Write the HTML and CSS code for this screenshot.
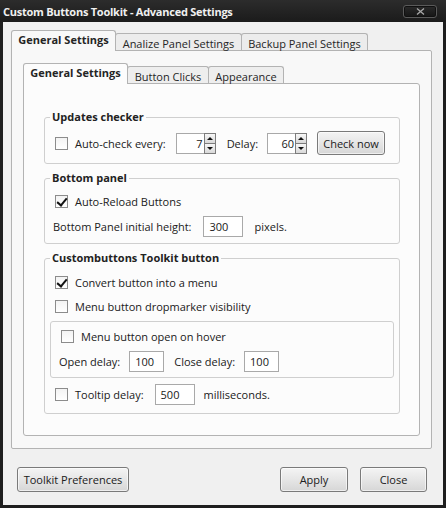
FILE: index.html
```html
<!DOCTYPE html>
<html>
<head>
<meta charset="utf-8">
<link rel="stylesheet" href="styles.css">
</head>
<body>
<div class="window">
  <div class="titlebar">
    <span class="title">Custom Buttons Toolkit - Advanced Settings</span>
    <span class="closebtn"><svg width="9" height="7" viewBox="0 0 9 7"><path d="M1 0.5 L8 6.5 M8 0.5 L1 6.5" stroke="#a8a8a8" stroke-width="1.3" fill="none"/></svg></span>
  </div>
  <div class="client">
    <div class="tabs outer-tabs">
      <div class="tab selected t-gen">General Settings</div>
      <div class="tab t-analize">Analize Panel Settings</div>
      <div class="tab t-backup">Backup Panel Settings</div>
    </div>
    <div class="panel outer-panel">
      <div class="tabs inner-tabs">
        <div class="tab selected t-igen">General Settings</div>
        <div class="tab t-clicks">Button Clicks</div>
        <div class="tab t-appear">Appearance</div>
      </div>
      <div class="panel inner-panel">
        <fieldset class="group g-updates">
          <legend>Updates checker</legend>
          <div class="row r-updates">
            <span class="cb"></span>
            <span class="lbl l-every">Auto-check every:</span>
            <span class="spin"><span class="val">7</span><span class="arrows"><span class="up"></span><span class="down"></span></span></span>
            <span class="lbl l-delay">Delay:</span>
            <span class="spin"><span class="val">60</span><span class="arrows"><span class="up"></span><span class="down"></span></span></span>
            <button class="btn btn-check">Check now</button>
          </div>
        </fieldset>
        <fieldset class="group g-bottom">
          <legend>Bottom panel</legend>
          <div class="row r-cb r-first">
            <span class="cb checked"></span>
            <span class="lbl">Auto-Reload Buttons</span>
          </div>
          <div class="row r-field">
            <span class="lbl">Bottom Panel initial height:</span>
            <span class="field f-wide">300</span>
            <span class="lbl">pixels.</span>
          </div>
        </fieldset>
        <fieldset class="group g-toolkit">
          <legend>Custombuttons Toolkit button</legend>
          <div class="row r-cb r-first">
            <span class="cb checked"></span>
            <span class="lbl">Convert button into a menu</span>
          </div>
          <div class="row r-cb">
            <span class="cb"></span>
            <span class="lbl">Menu button dropmarker visibility</span>
          </div>
          <div class="subbox">
            <div class="row r-cb">
              <span class="cb"></span>
              <span class="lbl">Menu button open on hover</span>
            </div>
            <div class="row r-field">
              <span class="lbl">Open delay:</span>
              <span class="field f-narrow">100</span>
              <span class="lbl">Close delay:</span>
              <span class="field f-narrow">100</span>
            </div>
          </div>
          <div class="row r-cbfield">
            <span class="cb"></span>
            <span class="lbl">Tooltip delay:</span>
            <span class="field f-wide">500</span>
            <span class="lbl">milliseconds.</span>
          </div>
        </fieldset>
      </div>
    </div>
    <div class="footer">
      <button class="btn btn-prefs">Toolkit Preferences</button>
      <div class="footer-right">
        <button class="btn btn-apply">Apply</button>
        <button class="btn btn-close">Close</button>
      </div>
    </div>
  </div>
</div>
</body>
</html>
```

FILE: styles.css
```css
* { box-sizing: border-box; }
html, body { margin: 0; padding: 0; }
body {
  width: 446px;
  height: 508px;
  background: #1c1c1c;
  font-family: "Open Sans", "DejaVu Sans", sans-serif;
  font-size: 11px;
  color: #202020;
}
.window {
  width: 446px;
  height: 508px;
  display: flex;
  flex-direction: column;
  background: #1e1e1e;
}
.titlebar {
  height: 22px;
  flex: none;
  display: flex;
  align-items: center;
  justify-content: space-between;
  padding: 0 9px 0 3px;
  background: linear-gradient(#2c2c2c, #1b1b1b);
}
.title {
  color: #f0f0f0;
  font-size: 11px;
  font-weight: 700;
  letter-spacing: -0.25px;
}
.closebtn {
  width: 34px;
  height: 13px;
  border: 1px solid #5a5a5a;
  border-radius: 3px;
  background: linear-gradient(#2a2a2a, #151515);
  display: flex;
  align-items: center;
  justify-content: center;
  box-shadow: inset 0 0 0 1px #101010;
}
.client {
  flex: 1;
  margin: 0 3px 3px 3px;
  background: #f0f0f0;
  padding: 8px 11px 13px 8px;
  display: flex;
  flex-direction: column;
}
.tabs {
  display: flex;
  align-items: flex-end;
  height: 20px;
  flex: none;
  position: relative;
  z-index: 2;
}
.tab {
  height: 17px;
  border: 1px solid #b3b3b3;
  border-bottom: none;
  border-radius: 3px 3px 0 0;
  background: #ececec;
  display: flex;
  align-items: center;
  justify-content: center;
  margin-left: -1px;
  white-space: nowrap;
  color: #252525;
  padding-top: 2px;
}
.tab.selected {
  height: 21px;
  margin-bottom: -1px;
  margin-left: 0;
  font-weight: 700;
  padding-bottom: 3px;
  padding-top: 0;
}
.outer-tabs .tab.selected { background: #f8f8f8; }
.inner-tabs .tab.selected { background: #fcfcfc; }
.t-gen { width: 105px; }
.t-analize { width: 127px; }
.t-backup { width: 127px; }
.t-igen { width: 105px; }
.t-clicks { width: 82px; }
.t-appear { width: 76px; }
.inner-tabs .tab { background: #eeeeee; }
.panel {
  border: 1px solid #b3b3b3;
  position: relative;
  z-index: 1;
}
.outer-panel {
  height: 399px;
  flex: none;
  width: 421px;
  background: #f8f8f8;
  padding: 12px 11px;
  display: flex;
  flex-direction: column;
  border-radius: 0 2px 2px 2px;
}
.inner-panel {
  height: 353px;
  flex: none;
  background: #fcfcfc;
  padding: 26px 19px 0 20px;
  border-radius: 0 3px 3px 3px;
}
.group {
  margin: 0 0 7px 0;
  padding: 0 8px;
  border: 1px solid #cfcfcf;
  border-radius: 3px;
  min-width: 0;
}
.group legend {
  font-weight: 700;
  line-height: 14px;
  padding: 0 2px;
  margin-left: -3px;
  color: #222;
}
.row {
  display: flex;
  align-items: center;
  white-space: nowrap;
}
.cb {
  width: 13px;
  height: 13px;
  flex: none;
  border: 1px solid #8c8c8c;
  background: linear-gradient(#f3f3f3, #ffffff);
  margin: 0 7px 0 2px;
  position: relative;
}
.cb.checked::after {
  content: "";
  position: absolute;
  left: 3px;
  top: 0px;
  width: 4px;
  height: 8px;
  border: solid #111;
  border-width: 0 2px 2px 0;
  transform: rotate(40deg);
}
.r-updates { height: 24px; margin: 7px 0 8px 0; }
.spin {
  width: 40px;
  height: 21px;
  border: 1px solid #a9a9a9;
  background: #fff;
  display: flex;
  flex: none;
}
.l-every { margin-right: 10px; }
.l-delay { margin: 0 9px 0 11px; }
.spin .val {
  flex: 1;
  text-align: right;
  line-height: 19px;
  padding-right: 1px;
}
.spin .arrows {
  width: 12px;
  display: flex;
  flex-direction: column;
  margin: -1px -1px -1px 0;
}
.spin .up, .spin .down {
  flex: 1;
  border: 1px solid #7c7c7c;
  background: linear-gradient(#f7f7f7, #d9d9d9);
  position: relative;
}
.spin .down { border-top: none; }
.spin .up::after, .spin .down::after {
  content: "";
  position: absolute;
  left: 2px;
  border-left: 3px solid transparent;
  border-right: 3px solid transparent;
}
.spin .up::after { top: 3px; border-bottom: 3px solid #111; }
.spin .down::after { top: 3px; border-top: 3px solid #111; }
.btn {
  font-family: inherit;
  font-size: 11px;
  color: #202020;
  border: 1px solid #7a7a7a;
  border-radius: 3px;
  background: linear-gradient(#f4f4f4 0%, #e6e6e6 50%, #d6d6d6 100%);
  padding: 0;
  box-shadow: inset 0 0 0 1px rgba(255,255,255,0.6);
}
.btn-check { width: 68px; height: 24px; margin-left: 10px; }
.r-cb { height: 24px; }
.g-bottom .r-first { margin-top: 4px; }
.r-field { height: 23px; margin-top: 2px; margin-bottom: 5px; }
.field {
  height: 21px;
  border: 1px solid #a9a9a9;
  background: #fff;
  line-height: 19px;
  padding-left: 5px;
  flex: none;
}
.f-wide { width: 40px; }
.f-narrow { width: 35px; }
.g-bottom .r-field .field { margin: 0 11px 0 12px; }
.g-toolkit .r-first { margin-top: 5px; }
.subbox {
  margin: 3px -3px 0 -3px;
  border: 1px solid #cfcfcf;
  border-radius: 3px;
  padding: 2px 8px 4px 8px;
}
.subbox .r-field { margin: 2px 0 0 0; }
.subbox .r-field .field { margin: 0 10px 0 9px; }
.r-cbfield { height: 23px; margin: 5px 0 7px 0; }
.r-cbfield .field { margin: 0 9px 0 11px; }
.footer {
  flex: none;
  margin: 18px 5px 0 6px;
  display: flex;
  justify-content: space-between;
}
.footer-right { display: flex; gap: 12px; }
.btn-prefs { width: 112px; height: 25px; }
.btn-apply { width: 68px; height: 25px; }
.btn-close { width: 67px; height: 25px; }
```
